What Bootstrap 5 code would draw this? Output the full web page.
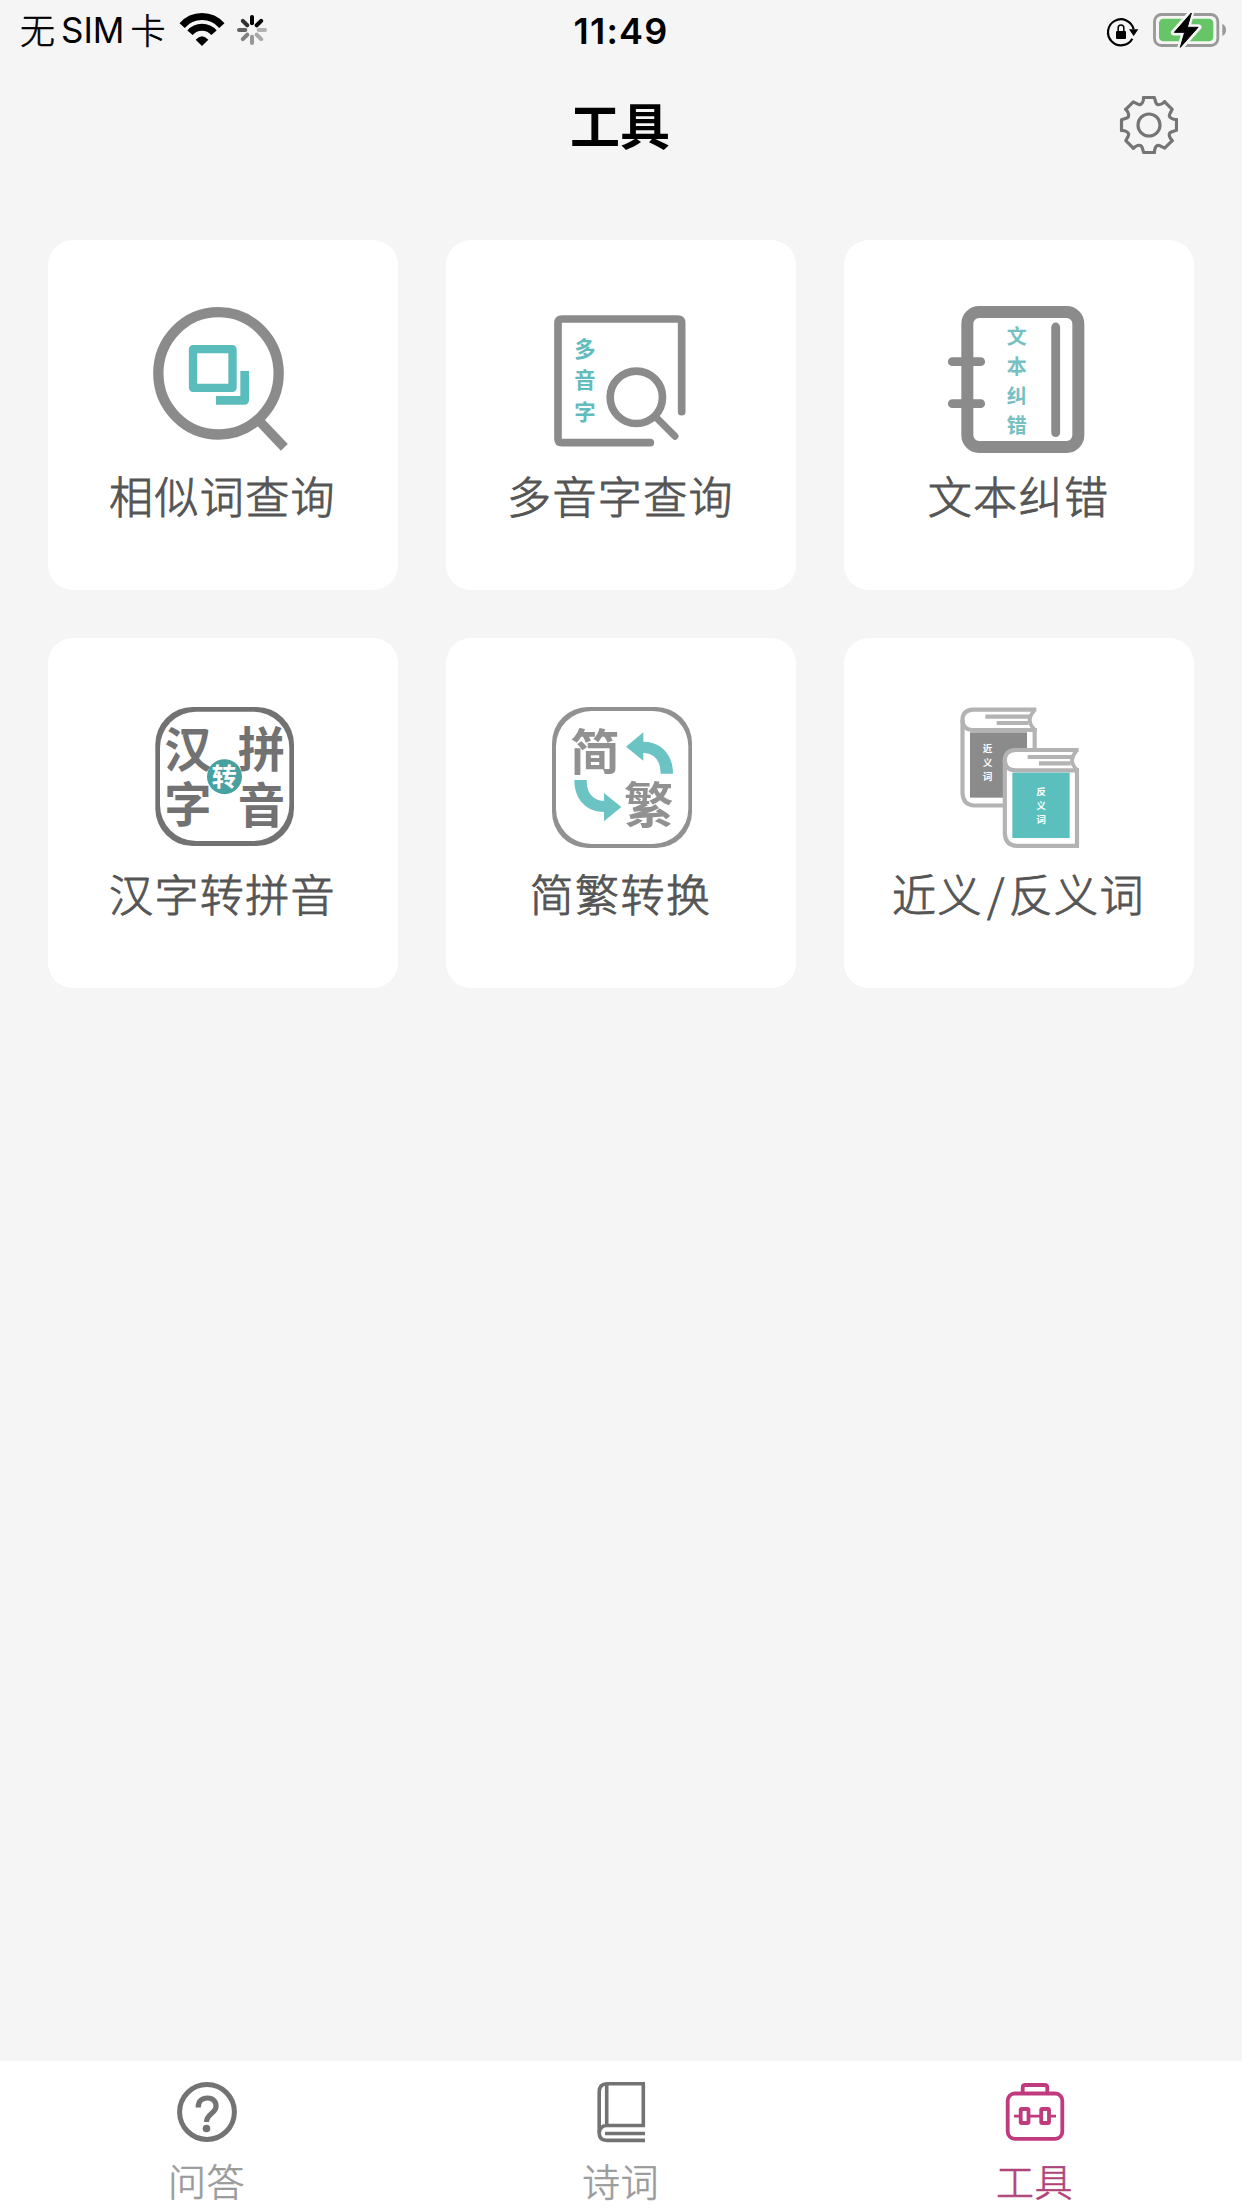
<!DOCTYPE html>
<html lang="zh-CN">
<head>
<meta charset="utf-8">
<meta name="viewport" content="width=device-width, initial-scale=1">
<title>工具</title>
<link href="https://cdn.jsdelivr.net/npm/bootstrap@5.3.0/dist/css/bootstrap.min.css" rel="stylesheet">
<style>
  body { background: #f5f5f5; font-family: "Noto Sans CJK SC", sans-serif; color: #000; height: 2208px; overflow: hidden; }
  svg { display: block; flex: none; }
  svg text { font-family: "Noto Sans CJK SC", sans-serif; font-weight: 700; text-anchor: middle; }
  .status-bar { height: 60px; padding: 0 14px 0 20px; }
  .carrier { font-size: 35px; line-height: 60px; gap: 6px; width: 152px; font-weight: 300; -webkit-text-stroke: .6px currentColor; }
  .latin { font-family: Inter, sans-serif; font-size: 35px; font-weight: 400; letter-spacing: 0; line-height: 63px; -webkit-text-stroke: 0; }
  .clock { font-family: Inter, sans-serif; font-weight: 600; font-size: 36px; line-height: 62px; letter-spacing: 1.200px; margin: 2px 3px 0 -3px; }
  .title-bar { height: 132px; }
  .title-bar h1 { font-size: 50px; line-height: 126px; height: 132px; font-weight: 700; padding-left: 2px; }
  .tool-grid { gap: 48px; padding: 48px; }
  .tool { width: 350px; height: 350px; border-radius: 25px; padding-top: 60px; background: #fff; color: #555; }
  .tool-name { font-size: 44px; letter-spacing: 1.400px; line-height: 60px; margin-top: 5px; padding-right: 1px; white-space: nowrap; font-weight: 300; -webkit-text-stroke: .9px currentColor; }
  .slash { margin: 0 3px 0 4px; }
  .tab-bar { height: 147px; background: #fff; }
  .tab-item { color: #9b9b9b; padding-top: 13px; }
  .tab-item span { font-size: 38px; letter-spacing: .5px; line-height: 60px; font-weight: 300; padding-right: 1px; -webkit-text-stroke: .6px currentColor; }
  .tab-item.current { color: #b1437b; }
</style>
</head>
<body class="d-flex flex-column m-0">
  <header>
    <div class="status-bar d-flex align-items-center">
      <div class="d-flex align-items-center w-50">
        <div class="carrier d-flex"><span>无</span><span class="latin">SIM</span><span>卡</span></div>
        <svg width="98" height="60" viewBox="516 0 294 180" role="img" aria-label="Wi-Fi">
          <g fill="none" stroke="#000" stroke-width="21">
            <path d="M546.5 76.8A79 79 0 0 1 665.5 76.8"/>
            <path d="M570 98.500A47.500 47.500 0 0 1 642 98.500"/>
          </g>
          <path d="M606 138L587 119Q606 98 625 119Z"/>
          <defs><path id="ray" d="M0-20V-39" stroke="#000" stroke-width="12" stroke-linecap="round"/></defs>
          <g transform="translate(756 90)">
            <use href="#ray"/>
            <use href="#ray" transform="rotate(45)"/>
            <use href="#ray" transform="rotate(90)" opacity=".27"/>
            <use href="#ray" transform="rotate(135)" opacity=".31"/>
            <use href="#ray" transform="rotate(180)" opacity=".38"/>
            <use href="#ray" transform="rotate(225)" opacity=".47"/>
            <use href="#ray" transform="rotate(270)" opacity=".6"/>
            <use href="#ray" transform="rotate(315)" opacity=".8"/>
          </g>
        </svg>
      </div>
      <div class="clock">11:49</div>
      <div class="d-flex justify-content-end w-50">
        <svg width="123" height="60" viewBox="45 0 369 180" role="img" aria-label="电池充电中">
          <path d="M127 116A39 39 0 1 1 131 88" fill="none" stroke="#000" stroke-width="6.500"/>
          <path d="M117 88H145L131 108Z"/>
          <rect x="78" y="93" width="30" height="24" rx="3"/>
          <path d="M84.500 94V84Q84.500 75 93 75T101.500 84V94" fill="none" stroke="#000" stroke-width="4.500"/>
          <rect x="193.500" y="43.500" width="190" height="93" rx="21" fill="none" stroke="#999" stroke-width="8.500"/>
          <rect x="207" y="56" width="163" height="68" rx="13" fill="#66c667"/>
          <path d="M397 71Q408 77 408 90T397 108Z" fill="#999"/>
          <path d="M304 37L251 98H283L270 144L326 81H293Z" stroke="#f5f5f5" stroke-width="17" fill="#f5f5f5" stroke-linejoin="round"/>
          <path d="M304 39L253 97H284L271 142L324 82H292Z" stroke="#000" stroke-width="3" stroke-linejoin="round"/>
        </svg>
      </div>
    </div>
    <div class="title-bar d-flex align-items-center">
      <div class="w-50"></div>
      <h1 class="m-0 text-nowrap">工具</h1>
      <div class="w-50 d-flex justify-content-end pe-5">
        <svg class="me-3" width="60" height="60" viewBox="-93 -87 180 180" fill="none" stroke="#757575" stroke-width="9.500" stroke-linecap="round" stroke-linejoin="round" role="img" aria-label="设置">
          <defs><path id="tooth" d="M-16-82.500H16L19-73Q22.200-54 40.300-64.500L47-69.700"/></defs>
          <use href="#tooth"/><use href="#tooth" transform="rotate(45)"/><use href="#tooth" transform="rotate(90)"/><use href="#tooth" transform="rotate(135)"/>
          <use href="#tooth" transform="rotate(180)"/><use href="#tooth" transform="rotate(225)"/><use href="#tooth" transform="rotate(270)"/><use href="#tooth" transform="rotate(315)"/>
          <circle r="33"/>
        </svg>
      </div>
    </div>
  </header>

  <main class="flex-grow-1">
    <div class="tool-grid d-flex flex-wrap">
      <div class="tool d-flex flex-column align-items-center">
        <svg width="160" height="160" viewBox="309 210 480 480" fill="none" stroke="#8b8b8b">
          <path d="M655 570L733 652" stroke-width="29"/>
          <ellipse cx="535.500" cy="430" rx="180.500" ry="183.500" stroke-width="31"/>
          <rect x="459" y="357.500" width="118.500" height="116" stroke="#5bbdbb" stroke-width="25" stroke-linejoin="round"/>
          <path d="M614 423V511H528" stroke="#5bbdbb" stroke-width="26" stroke-linejoin="round"/>
        </svg>
        <div class="tool-name">相似词查询</div>
      </div>
      <div class="tool d-flex flex-column align-items-center">
        <svg width="160" height="160" viewBox="303 210 480 480" fill="none" stroke="#8b8b8b" stroke-linecap="round">
          <path d="M725 545V279Q725 267 713 267H366Q354 267 354 279V626Q354 638 366 638H631" stroke-width="23"/>
          <circle cx="589" cy="502" r="78.500" stroke-width="23"/>
          <path d="M648 562L705 619" stroke-width="21"/>
          <g fill="#62bbbd" stroke="none" font-size="64"><text x="435" y="380">多</text><text x="435" y="475">音</text><text x="435" y="569">字</text></g>
        </svg>
        <div class="tool-name">多音字查询</div>
      </div>
      <div class="tool d-flex flex-column align-items-center">
        <svg width="160" height="160" viewBox="312 210 480 480" fill="none" stroke="#8b8b8b" stroke-linecap="round">
          <rect x="397" y="246" width="333" height="405" rx="35" stroke-width="36"/>
          <path d="M662 291V608M352 395H437M352 521H437" stroke-width="26.500"/>
          <g fill="#76c0c3" stroke="none" font-size="60"><text x="545" y="341">文</text><text x="545" y="431">本</text><text x="545" y="521">纠</text><text x="545" y="610">错</text></g>
        </svg>
        <div class="tool-name">文本纠错</div>
      </div>
      <div class="tool d-flex flex-column align-items-center">
        <svg width="160" height="160" viewBox="309 204 480 480">
          <rect x="346" y="231" width="416" height="417" rx="112" fill="#727272"/>
          <rect x="360" y="245" width="388" height="388" rx="108" fill="#fff"/>
          <g fill="#727272" font-size="142"><text x="444" y="410">汉</text><text x="664" y="410">拼</text><text x="444" y="576">字</text><text x="664" y="578">音</text></g>
          <circle cx="553.500" cy="440" r="52.500" fill="#47a1a1"/>
          <text x="553" y="468" font-size="75" fill="#fff">转</text>
        </svg>
        <div class="tool-name">汉字转拼音</div>
      </div>
      <div class="tool d-flex flex-column align-items-center">
        <svg width="160" height="160" viewBox="303 204 480 480">
          <rect x="336" y="231" width="420" height="423" rx="108" fill="#919191"/>
          <rect x="348" y="243" width="397" height="399" rx="106" fill="#fff"/>
          <g fill="#919191" font-size="148"><text x="465" y="419">简</text><text x="626" y="580">繁</text></g>
          <defs><path id="turn" d="M610 307L558 350L610 392V368Q662 372 662 431H699C699 370 660 335 610 335Z" fill="#6cc3c3"/></defs>
          <use href="#turn"/><use href="#turn" transform="rotate(180 551 440.500)"/>
        </svg>
        <div class="tool-name">简繁转换</div>
      </div>
      <div class="tool d-flex flex-column align-items-center">
        <svg width="160" height="160" viewBox="312 204 480 480">
          <defs>
            <g id="volume" fill="none" stroke="#b3b3b3" stroke-width="12.500">
              <path d="M731 360H541Q509.500 362 509.500 391V610Q511 646 545 647.500H726V415" fill="#fff"/>
              <path d="M509.500 391Q511 421 541 421H732M578 381H713M612 400H707"/>
              <path d="M724 364Q698 391 724 418" stroke-width="11"/>
            </g>
          </defs>
          <use href="#volume" transform="translate(-127 -121)"/>
          <rect x="405" y="307" width="171" height="196" fill="#8b8b8b"/>
          <g fill="#fff" font-size="29"><text x="458" y="367">近</text><text x="458" y="408">义</text><text x="458" y="449">词</text></g>
          <use href="#volume"/>
          <rect x="532" y="428" width="172" height="196" fill="#5bbfbd"/>
          <g fill="#fff" font-size="29"><text x="618" y="496">反</text><text x="618" y="536">义</text><text x="618" y="578">词</text></g>
        </svg>
        <div class="tool-name">近义<span class="slash">/</span>反义词</div>
      </div>
    </div>
  </main>

  <nav class="tab-bar d-flex">
    <div class="tab-item d-flex flex-column align-items-center w-100">
      <svg width="76" height="76" viewBox="169 2074 76 76" fill="none" stroke="#737373">
        <circle cx="207" cy="2112" r="27.400" stroke-width="5"/>
        <path d="M198.200 2107.500C198 2101 202 2098 207.500 2098S216.500 2101.500 216 2107C215.500 2113.500 206.500 2114 206.500 2122" stroke-width="5.200"/>
        <circle cx="206.500" cy="2128.500" r="3.800" fill="#737373" stroke="none"/>
      </svg>
      <span>问答</span>
    </div>
    <div class="tab-item d-flex flex-column align-items-center w-100">
      <svg width="76" height="76" viewBox="583 2074 76 76" fill="none" stroke="#737373" stroke-width="3.600">
        <path d="M645 2083.700H607Q599.200 2083.700 599.200 2092V2133Q599.200 2140.400 607 2140.400H645"/>
        <path d="M606.700 2084V2125M643.300 2083.700V2125.500H607Q600 2125.500 599.200 2133M605 2133.500H645"/>
      </svg>
      <span>诗词</span>
    </div>
    <div class="tab-item current d-flex flex-column align-items-center w-100">
      <svg width="76" height="76" viewBox="997 2074 76 76" fill="none" stroke="#c03a7e" stroke-width="3.800">
        <rect x="1007.700" y="2093.500" width="54.600" height="45.300" rx="7"/>
        <path d="M1022.700 2093V2087.500Q1022.700 2085 1025.500 2085H1044.500Q1047.300 2085 1047.300 2087.500V2093"/>
        <rect x="1020.700" y="2109" width="7.800" height="14" rx="1"/><rect x="1041.200" y="2109" width="7.800" height="14" rx="1"/>
        <path d="M1014 2116.200H1020.500M1029 2116.200H1041M1049.500 2116.200H1056" stroke-width="2.800"/>
      </svg>
      <span>工具</span>
    </div>
  </nav>
<script src="https://cdn.jsdelivr.net/npm/bootstrap@5.3.0/dist/js/bootstrap.bundle.min.js"></script>
</body>
</html>
